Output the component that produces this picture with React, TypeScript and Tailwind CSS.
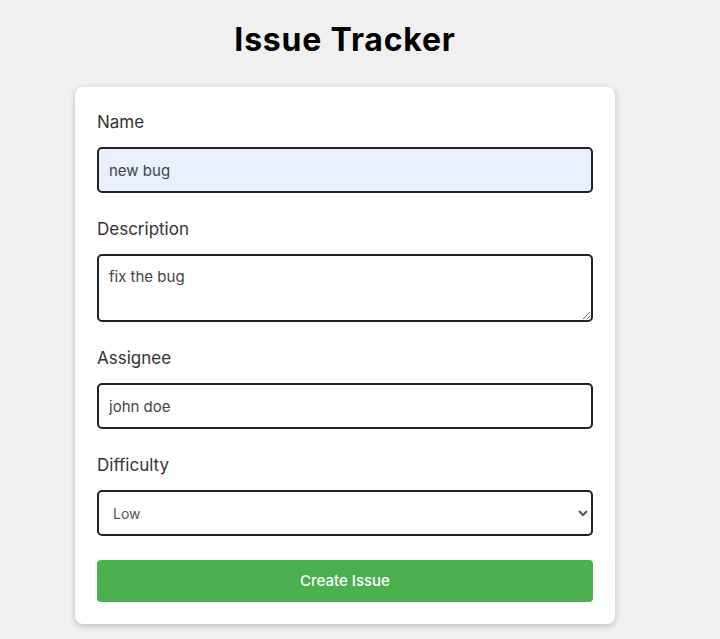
import React from 'react'

const font = { fontFamily: 'Inter, "Noto Sans", sans-serif' }

const Field = ({ label, children }: { label: string; children: React.ReactNode }) => (
  <div className="flex flex-col">
    <label className="text-[17px] leading-[26px] text-[#333] mb-[12px]">{label}</label>
    {children}
  </div>
)

const App = () => {
  return (
    <div className="min-h-[639px] bg-[#f0f0f0]" style={font}>
      <div className="w-[690px] flex flex-col items-center pt-[21px]">
        <h1 className="text-[32px] leading-[38px] font-bold tracking-[0.8px] text-black mb-[28px]">Issue Tracker</h1>

        <form className="w-[540px] bg-white rounded-[8px] shadow-[0_2px_6px_rgba(0,0,0,0.22)] pt-[22px] px-[22px] pb-[22px] flex flex-col gap-[23px]">
          <Field label="Name">
            <input
              defaultValue="new bug"
              className="h-[46px] rounded-[5px] border-2 border-[#222] bg-[#e8f0fe] px-[10px] text-[15px] text-[#444] outline-none"
            />
          </Field>

          <Field label="Description">
            <textarea
              defaultValue="fix the bug"
              className="h-[68px] rounded-[5px] border-2 border-[#222] bg-white px-[10px] py-[10px] text-[15px] leading-[22px] text-[#444] outline-none"
            />
          </Field>

          <Field label="Assignee">
            <input
              defaultValue="john doe"
              className="h-[46px] rounded-[5px] border-2 border-[#222] bg-white px-[10px] text-[15px] text-[#444] outline-none"
            />
          </Field>

          <Field label="Difficulty">
            <select
              defaultValue="Low"
              className="h-[46px] rounded-[5px] border-2 border-[#222] bg-white px-[10px] text-[14px] text-[#555] outline-none"
            >
              <option>Low</option>
              <option>Medium</option>
              <option>High</option>
            </select>
          </Field>

          <button
            type="button"
            className="h-[42px] mt-[1px] rounded-[4px] bg-[#4caf50] text-white text-[15px] font-medium"
          >
            Create Issue
          </button>
        </form>
      </div>
    </div>
  )
}

export default App
